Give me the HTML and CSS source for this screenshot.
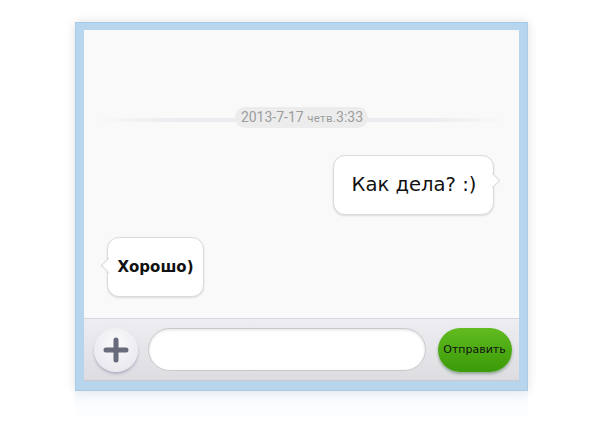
FILE: index.html
```html
<!DOCTYPE html>
<html lang="ru">
<head>
  <meta charset="UTF-8" />
  <meta name="viewport" content="width=device-width, initial-scale=1.0">
  <title>Чат</title>
  <link rel="stylesheet" href="styles.css">
</head>
<body>
  <div class="frame">
    <div class="messages">
      <div class="date-row">
        <span class="date-pill">2013-7-17 <small>четв.</small>3:33</span>
      </div>
      <div class="bubble out">Как дела? :)</div>
      <div class="bubble in">Хорошо)</div>
    </div>
    <div class="toolbar">
      <button class="plus-btn">
        <svg width="26" height="26" viewBox="0 0 26 26">
          <path d="M13 3 V23 M3 13 H23" stroke="#676b7b" stroke-width="5" stroke-linecap="round" fill="none"/>
        </svg>
      </button>
      <div class="msg-input"></div>
      <button class="send-btn">Отправить</button>
    </div>
  </div>
  <div class="reflection"></div>
</body>
</html>
```

FILE: styles.css
```css
* { margin: 0; padding: 0; box-sizing: border-box; }
body {
  background: #fff;
  display: flex;
  flex-direction: column;
  align-items: center;
  padding-top: 22px;
  font-family: "DejaVu Sans", Verdana, sans-serif;
}
.frame {
  width: 453px;
  height: 369px;
  background: #b7d6ee;
  border: 1px solid #a9cbe6;
  padding: 7px 8px 8px 8px;
  display: flex;
  flex-direction: column;
  box-shadow: 0 0 10px rgba(0, 0, 0, 0.12);
}
.messages {
  height: 288px;
  background: #f9f9f9;
  display: flex;
  flex-direction: column;
  padding-top: 77px;
}
.date-row {
  position: relative;
  display: flex;
  justify-content: center;
  height: 21px;
  margin-left: 1px;
}
.date-row::before {
  content: "";
  position: absolute;
  left: 12px;
  right: 12px;
  top: 11px;
  height: 4px;
  background: linear-gradient(to right, rgba(230,230,235,0), #ebebf0 20%, #ebebf0 80%, rgba(230,230,235,0));
}
.date-pill {
  position: relative;
  background: #ececec;
  border-radius: 10px;
  padding: 0 5px 0 6px;
  font-family: Roboto, "Noto Sans", sans-serif;
  font-size: 14px;
  line-height: 21px;
  color: #9d9d9d;
}
.date-pill small {
  font-size: 11.5px;
  letter-spacing: 0.3px;
}
.bubble {
  position: relative;
  background: #fff;
  border: 1px solid #dadada;
  border-radius: 12px;
  box-shadow: 0 1px 2px rgba(0, 0, 0, 0.12);
  height: 60px;
  display: flex;
  align-items: center;
  color: #111;
}
.bubble::after {
  content: "";
  position: absolute;
  width: 10px;
  height: 10px;
  background: #fff;
  transform: rotate(45deg);
}
.bubble.out {
  align-self: flex-end;
  margin-right: 25px;
  margin-top: 27px;
  width: 161px;
  padding-left: 18px;
  padding-bottom: 1px;
  font-size: 19.6px;
}
.bubble.out::after {
  top: 19px;
  right: -5px;
  border-top: 1px solid #dadada;
  border-right: 1px solid #dadada;
}
.bubble.in {
  align-self: flex-start;
  margin-left: 23px;
  margin-top: 22px;
  width: 97px;
  padding-left: 10px;
  font-size: 15px;
  font-weight: bold;
}
.bubble.in::after {
  top: 22px;
  left: -5px;
  border-bottom: 1px solid #dadada;
  border-left: 1px solid #dadada;
}
.toolbar {
  height: 63px;
  background: linear-gradient(#eeeef2, #dcdce1);
  border-top: 1px solid #d6d6dc;
  border-bottom: 1px solid #c9c9cf;
  display: flex;
  align-items: center;
  padding-left: 10px;
}
.plus-btn {
  width: 44px;
  height: 44px;
  border-radius: 50%;
  border: none;
  background: radial-gradient(circle at 50% 35%, #fafafc, #e4e4ea);
  box-shadow: 0 2px 3px rgba(70, 70, 120, 0.3);
  display: flex;
  align-items: center;
  justify-content: center;
}
.msg-input {
  width: 278px;
  height: 43px;
  margin-left: 10px;
  background: #fff;
  border: 1px solid #c8c8cd;
  border-radius: 22px;
  box-shadow: inset 0 1px 3px rgba(0, 0, 0, 0.12);
}
.send-btn {
  width: 74px;
  height: 44px;
  margin-left: 12px;
  border: none;
  border-radius: 22px;
  background: linear-gradient(#62bb20, #3a9a08);
  box-shadow: 0 2px 3px rgba(0, 60, 0, 0.35);
  font-family: "DejaVu Sans", Verdana, sans-serif;
  font-size: 11px;
  color: #111;
}
.reflection {
  width: 453px;
  height: 30px;
  background: linear-gradient(rgba(215, 232, 245, 0.25), rgba(255, 255, 255, 0));
}
```
